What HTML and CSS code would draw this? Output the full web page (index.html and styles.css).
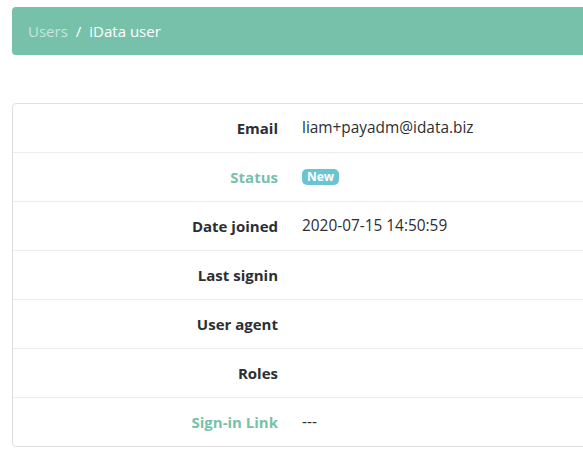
FILE: index.html
```html
<!DOCTYPE html>
<html>
<head>
<meta charset="utf-8">
<link rel="stylesheet" href="styles.css">
</head>
<body>
<div class="page">
  <nav class="crumbs">
    <a class="crumb-link">Users</a>
    <span class="crumb-sep">/</span>
    <span class="crumb-current">iData user</span>
  </nav>
  <div class="card">
    <div class="row"><div class="label">Email</div><div class="value">liam+payadm@idata.biz</div></div>
    <div class="row"><div class="label accent">Status</div><div class="value"><span class="badge">New</span></div></div>
    <div class="row"><div class="label">Date joined</div><div class="value">2020-07-15 14:50:59</div></div>
    <div class="row"><div class="label">Last signin</div><div class="value"></div></div>
    <div class="row"><div class="label">User agent</div><div class="value"></div></div>
    <div class="row"><div class="label">Roles</div><div class="value"></div></div>
    <div class="row"><div class="label accent">Sign-in Link</div><div class="value">---</div></div>
  </div>
</div>
</body>
</html>
```
FILE: styles.css
```css
html { overflow: hidden; }
body {
  margin: 0;
  font-family: "Open Sans", "Noto Sans", sans-serif;
  font-size: 15px;
  line-height: 24px;
  color: #212529;
  background: #fff;
}
.page {
  width: 800px;
  padding: 7px 0 0 12px;
}
.crumbs {
  display: flex;
  align-items: center;
  background: #77c1ab;
  border-radius: 4px;
  padding: 12px 16px;
  height: 24px;
  margin-bottom: 48px;
}
.crumb-link { color: #c4e6db; }
.crumb-sep { color: #fff; padding: 0 8px; }
.crumb-current { color: #fff; }
.card {
  border: 1px solid #dfdfdf;
  border-radius: 4px;
}
.row {
  display: flex;
  border-top: 1px solid #ececec;
}
.row:first-child { border-top: none; }
.label {
  width: 253px;
  flex: none;
  padding: 12px;
  text-align: right;
  font-weight: 700;
  color: #2b2f33;
}
.label.accent { color: #77c1ab; }
.value {
  padding: 12px;
  min-height: 24px;
  font-size: 15.4px;
  color: #2b2f33;
}
.badge {
  display: inline-block;
  background: #6bc4d4;
  color: #fff;
  font-weight: 700;
  font-size: 12px;
  line-height: 16px;
  padding: 0 5px;
  border-radius: 5px;
  vertical-align: 1px;
}
```
